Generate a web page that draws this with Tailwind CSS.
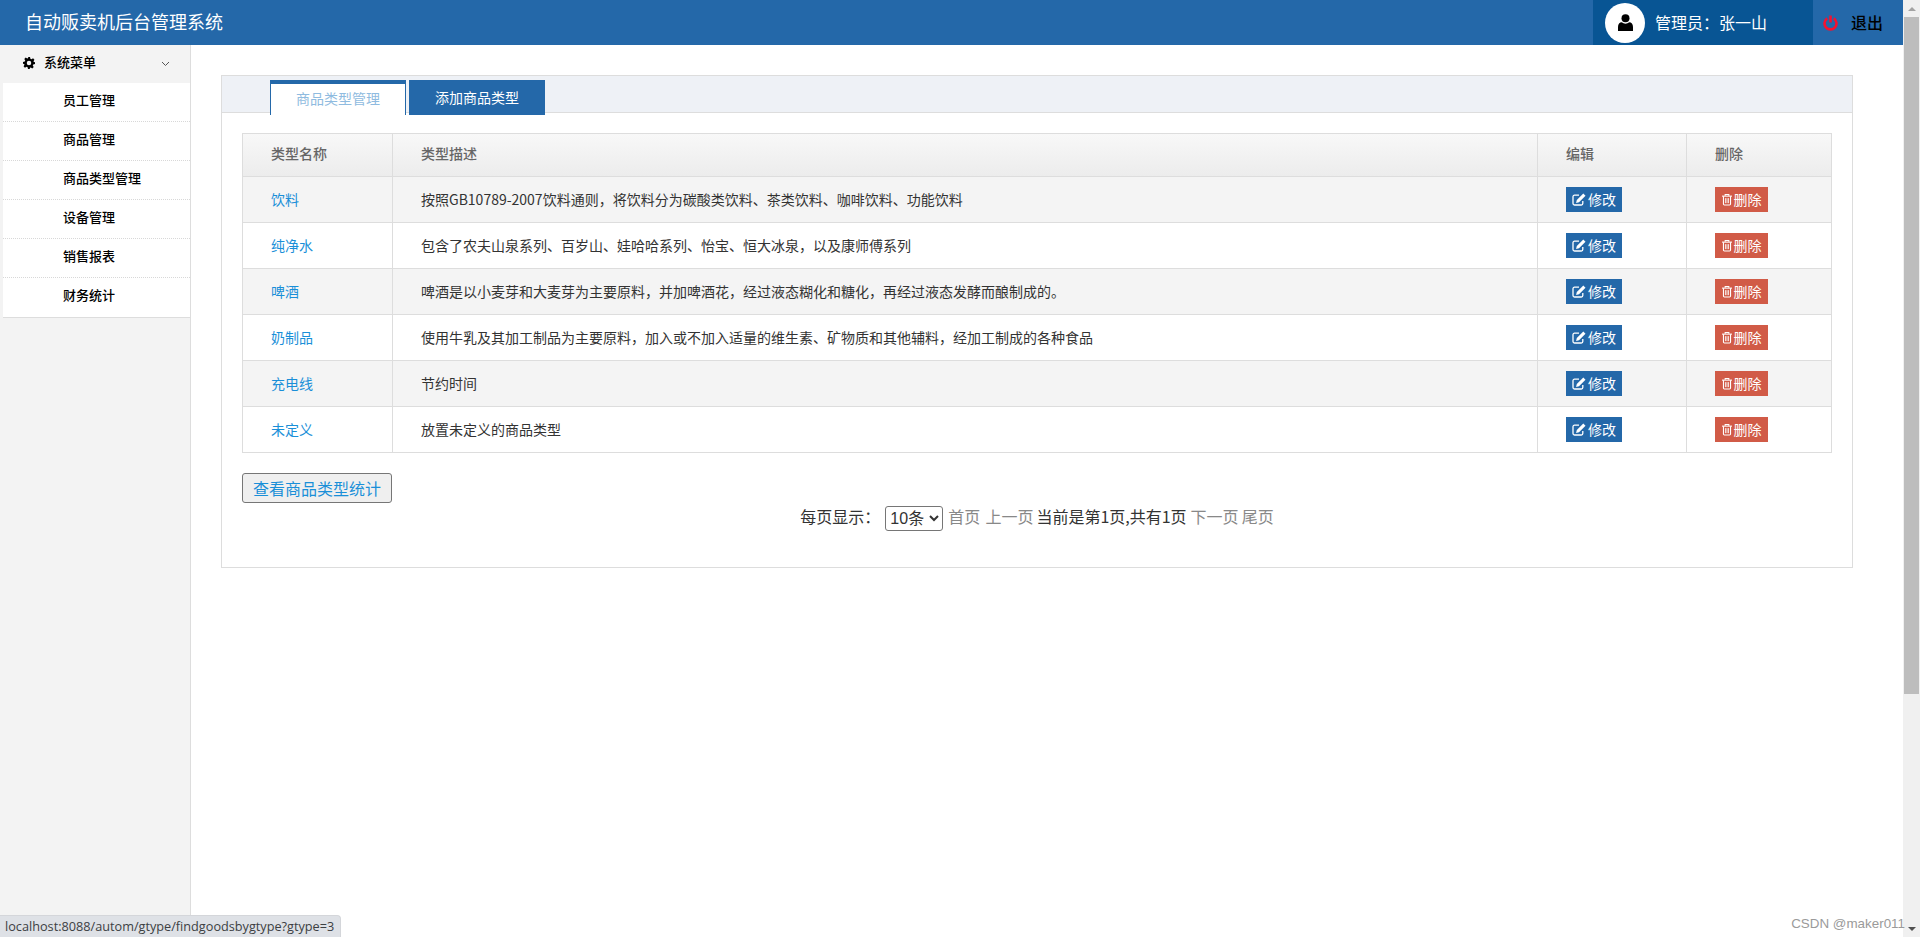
<!DOCTYPE html>
<html lang="zh-CN">
<head>
    <meta charset="UTF-8">
    <meta name="viewport" content="width=device-width, initial-scale=1.0">
    <title>自动贩卖机后台管理系统</title>
    <script src="https://cdn.jsdelivr.net/npm/@tailwindcss/browser@4"></script>
</head>
<body class="bg-white overflow-hidden font-['Noto_Sans_CJK_SC','Noto_Sans',sans-serif]">
<div class="relative flex h-[937px] w-[1920px]">

    <div class="flex flex-col w-[1903px] h-full">
        <!-- Navbar -->
        <header class="flex h-[45px] shrink-0 items-center bg-[#2468a9]">
            <a href="#" class="ml-[25px] pb-[2px] text-[18px] text-white">自动贩卖机后台管理系统</a>
            <div class="ml-auto flex h-full w-[220px] items-center bg-[#085594] pl-[12px]">
                <div class="flex h-[40px] w-[40px] items-center justify-center rounded-full bg-white">
                    <svg class="h-[17px] w-[15px]" viewBox="0 0 15 17" fill="#000"><circle cx="7.500" cy="4.200" r="4"/><path d="M0 17v-4C0 10.200 1.600 8.300 3.800 8.300 4.800 9.200 6.100 9.700 7.500 9.700S10.200 9.200 11.200 8.300C13.400 8.300 15 10.200 15 13v4z"/></svg>
                </div>
                <span class="ml-[10px] pb-[2px] text-[16px] text-white">管理员：张一山</span>
            </div>
            <div class="flex w-[90px] items-center pl-[10px]">
                <svg class="h-[16px] w-[15px]" viewBox="0 0 15 16" fill="none" stroke="#f5112f" stroke-width="2.600"><path d="M4.200 3.400a6 6 0 1 0 6.600 0"/><path d="M7.500 0.500V7.500"/></svg>
                <a href="#" class="ml-[13px] pb-[2px] text-[16px] font-medium text-black">退出</a>
            </div>
        </header>

        <div class="flex min-h-0 flex-1">
            <!-- Sidebar -->
            <aside class="w-[191px] shrink-0 border-r border-[#dddddd] bg-[#f3f3f3]">
                <div class="flex h-[38px] items-center pl-[23px] pr-[20px] text-[13px] font-medium text-black">
                    <svg class="mb-[2px] h-[12px] w-[12px]" viewBox="0 0 24 24" fill="#000" fill-rule="evenodd"><path d="M10 0h4l.8 3.500 2.300 1 3-1.900 2.800 2.800-1.900 3 1 2.300L24 10v4l-3.500.8-1 2.300 1.900 3-2.800 2.800-3-1.900-2.300 1L14 24h-4l-.8-3.500-2.300-1-3 1.900-2.800-2.800 1.900-3-1-2.300L0 14v-4l3.500-.8 1-2.300-1.900-3 2.800-2.800 3 1.900 2.300-1zM12 7.500a4.500 4.500 0 1 0 0 9 4.500 4.500 0 0 0 0-9z"/></svg>
                    <span class="ml-[9px] pb-[4px]">系统菜单</span>
                    <svg class="ml-auto h-[6px] w-[9px]" viewBox="0 0 9 6" fill="none" stroke="#555" stroke-width="1"><path d="M1 1l3.500 3.500L8 1"/></svg>
                </div>
                <nav class="ml-[3px] border-b border-[#dddddd] bg-white text-[13px] font-medium text-black">
                    <a href="#" class="flex h-[39px] items-center border-b border-dotted border-[#d8d8d8] pb-[4px] pl-[60px]">员工管理</a>
                    <a href="#" class="flex h-[39px] items-center border-b border-dotted border-[#d8d8d8] pb-[4px] pl-[60px]">商品管理</a>
                    <a href="#" class="flex h-[39px] items-center border-b border-dotted border-[#d8d8d8] pb-[4px] pl-[60px]">商品类型管理</a>
                    <a href="#" class="flex h-[39px] items-center border-b border-dotted border-[#d8d8d8] pb-[4px] pl-[60px]">设备管理</a>
                    <a href="#" class="flex h-[39px] items-center border-b border-dotted border-[#d8d8d8] pb-[4px] pl-[60px]">销售报表</a>
                    <a href="#" class="flex h-[39px] items-center pb-[5px] pl-[60px]">财务统计</a>
                </nav>
            </aside>

            <!-- Main Content -->
            <main class="flex-1 pl-[30px] pr-[50px] pt-[30px]">
                <div class="h-[493px] border border-[#dddddd]">
                    <div class="flex h-[37px] gap-[3px] border-b border-[#dddddd] bg-[#eef1f6] pl-[48px] pt-[4px]">
                        <a href="#" class="flex h-[35px] w-[136px] items-center justify-center border-x border-t-4 border-[#2468a9] bg-white pb-[2px] text-[14px] text-[#8fbbe0]">商品类型管理</a>
                        <a href="#" class="flex h-[35px] w-[136px] items-center justify-center bg-[#2468a9] text-[14px] text-white">添加商品类型</a>
                    </div>

                    <div class="px-[20px] pt-[20px]">
                        <table class="w-[1590px] table-fixed border-collapse text-[14px] text-[#333333]">
                            <thead>
                                <tr class="h-[43px] bg-gradient-to-b from-[#f8f8f8] to-[#ececec] text-left text-[14px] font-medium text-[#666666]">
                                    <th class="w-[150px] border border-[#dddddd] pb-[3px] pl-[28px] font-medium">类型名称</th>
                                    <th class="w-[1145px] border border-[#dddddd] pb-[3px] pl-[28px] font-medium">类型描述</th>
                                    <th class="w-[149px] border border-[#dddddd] pb-[3px] pl-[28px] font-medium">编辑</th>
                                    <th class="border border-[#dddddd] pb-[3px] pl-[28px] font-medium">删除</th>
                                </tr>
                            </thead>
                            <tbody id="type-list"></tbody>
                        </table>

                        <button class="mt-[20px] block h-[30px] w-[150px] rounded-[3px] border border-[#767676] bg-[#efefef] text-[16px] text-[#1a8fd8]">查看商品类型统计</button>

                        <div class="mt-[3px] flex h-[25px] items-start justify-center text-[16px] leading-[20px] text-[#333333]">
                            <span>每页显示：</span>
                            <select class="ml-[5px] h-[25px] w-[58px] rounded-[3px] border border-[#767676] bg-white font-['Liberation_Sans','Noto_Sans_CJK_SC',sans-serif] text-[16px] text-[#333333]">
                                <option>10条</option>
                            </select>
                            <a href="#" class="ml-[5px] text-[#888888]">首页</a>
                            <a href="#" class="ml-[5px] text-[#888888]">上一页</a>
                            <span class="ml-[3px]">当前是第1页,共有1页</span>
                            <a href="#" class="ml-[4px] text-[#888888]">下一页</a>
                            <a href="#" class="ml-[3px] text-[#888888]">尾页</a>
                        </div>
                    </div>
                </div>
            </main>
        </div>
    </div>

    <!-- scrollbar -->
    <div class="flex h-full w-[17px] shrink-0 flex-col items-center bg-[#f0f0f0]">
        <div class="flex h-[17px] w-full items-center justify-center">
            <svg class="h-[4px] w-[8px]" viewBox="0 0 8 4" fill="#a3a3a3"><path d="M4 0l4 4H0z"/></svg>
        </div>
        <div class="h-[677px] w-[15px] bg-[#bdbdbd]"></div>
        <div class="mt-auto flex h-[17px] w-full items-center justify-center">
            <svg class="h-[4px] w-[8px]" viewBox="0 0 8 4" fill="#505050"><path d="M0 0h8L4 4z"/></svg>
        </div>
    </div>

    <!-- link preview at the bottom of the browser -->
    <div class="absolute bottom-0 left-0 flex h-[22px] w-[341px] items-center rounded-tr-[4px] border-t border-r border-[#d4d6da] bg-[#dee1e6] pl-[5px] font-['Open_Sans',sans-serif] text-[12.700px] text-[#3c4043]">localhost:8088/autom/gtype/findgoodsbygtype?gtype=3</div>
    <div class="absolute bottom-[5px] right-[15px] font-['Liberation_Sans',sans-serif] text-[13.400px] leading-[16px] text-[#9a9a9a]">CSDN @maker011</div>
</div>

<script>
    const types = [
        ['饮料', '按照GB10789-2007饮料通则，将饮料分为碳酸类饮料、茶类饮料、咖啡饮料、功能饮料'],
        ['纯净水', '包含了农夫山泉系列、百岁山、娃哈哈系列、怡宝、恒大冰泉，以及康师傅系列'],
        ['啤酒', '啤酒是以小麦芽和大麦芽为主要原料，并加啤酒花，经过液态糊化和糖化，再经过液态发酵而酿制成的。'],
        ['奶制品', '使用牛乳及其加工制品为主要原料，加入或不加入适量的维生素、矿物质和其他辅料，经加工制成的各种食品'],
        ['充电线', '节约时间'],
        ['未定义', '放置未定义的商品类型']
    ];
    const editIcon = '<svg class="h-[13px] w-[14px]" viewBox="0 0 14 13" fill="none" stroke="#fff" stroke-width="1.300"><path d="M7 2.200H2.500A1.500 1.500 0 0 0 1 3.700v6.800A1.500 1.500 0 0 0 2.500 12h6.800a1.500 1.500 0 0 0 1.500-1.500V8"/><path fill="#fff" stroke="none" d="M11.300 0.500l2.200 2.200-6.500 6.500-2.900 .7 .7-2.900z"/></svg>';
    const trashIcon = '<svg class="h-[13px] w-[10px]" viewBox="0 0 11 13" fill="none" stroke="#fff" stroke-width="1.200"><path d="M0 2.800h11"/><path d="M3.500 2.500V1h4v1.500"/><path d="M1.600 2.800v8.700a1 1 0 0 0 1 1h5.800a1 1 0 0 0 1-1V2.800"/><path d="M3.800 5v5.500M5.500 5v5.500M7.200 5v5.500" stroke-width="0.900"/></svg>';
    const list = document.getElementById('type-list');
    types.forEach((item, i) => {
        const row = document.createElement('tr');
        row.className = i % 2 === 0 ? 'h-[46px] bg-[#f4f4f4]' : 'h-[46px] bg-white';
        row.innerHTML = `
            <td class="border border-[#dddddd] pb-[1px] pl-[28px]"><a href="#" class="text-[14px] text-[#1a8fd8]">${item[0]}</a></td>
            <td class="border border-[#dddddd] pb-[1px] pl-[28px]">${item[1]}</td>
            <td class="border border-[#dddddd] pl-[28px]"><a href="#" class="flex h-[25px] w-[56px] items-center justify-center gap-[2px] bg-[#2468a9] text-[14px] text-white">${editIcon}修改</a></td>
            <td class="border border-[#dddddd] pl-[28px]"><a href="#" class="flex h-[25px] w-[53px] items-center justify-center gap-[2px] bg-[#d15b47] text-[14px] text-white">${trashIcon}删除</a></td>
        `;
        list.appendChild(row);
    });
</script>
</body>
</html>
